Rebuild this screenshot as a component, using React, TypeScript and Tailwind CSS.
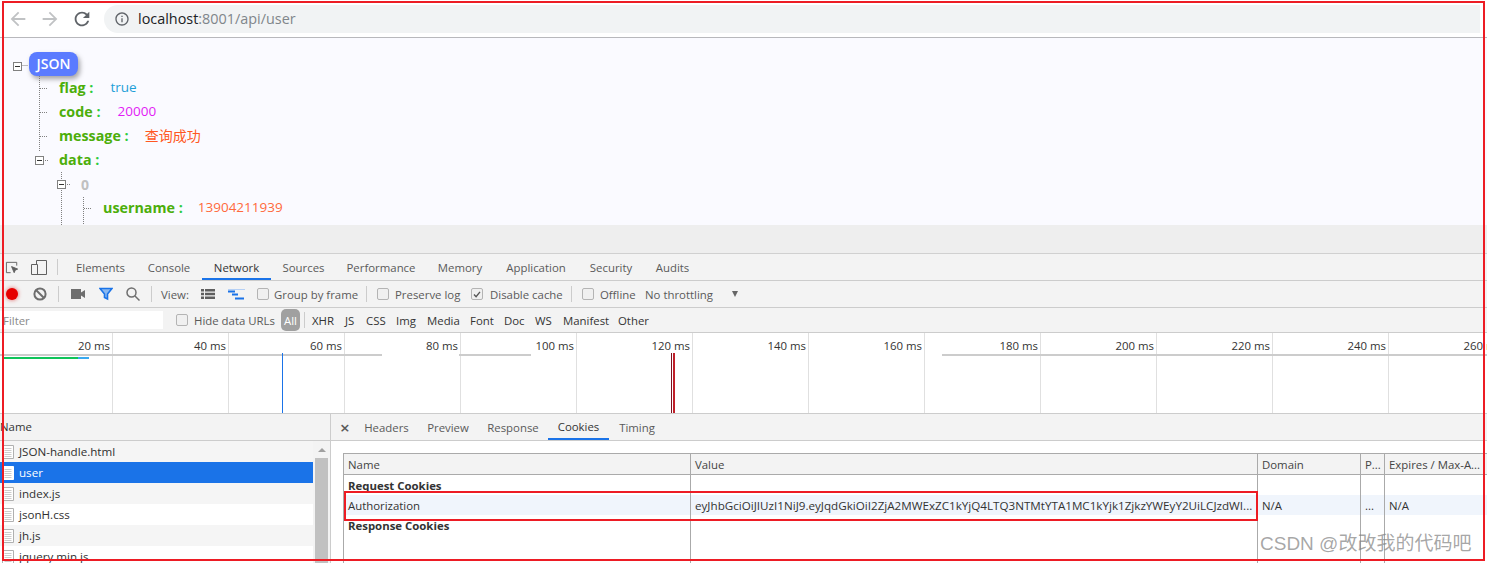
import type { ReactNode } from "react";

const font = "font-['Open_Sans','Noto_Sans_CJK_SC',sans-serif]";

const tabs = [
  ["Elements", 71],
  ["Console", 66],
  ["Network", 69],
  ["Sources", 65],
  ["Performance", 90],
  ["Memory", 68],
  ["Application", 84],
  ["Security", 66],
  ["Audits", 57],
] as const;

const filters = [
  ["XHR", 33],
  ["JS", 21],
  ["CSS", 30],
  ["Img", 31],
  ["Media", 43],
  ["Font", 34],
  ["Doc", 31],
  ["WS", 28],
  ["Manifest", 55],
  ["Other", 40],
] as const;

const ticks = ["20", "40", "60", "80", "100", "120", "140", "160", "180", "200", "220", "240", "260"];

const files = [
  ["JSON-handle.html", "bg-[#f5f5f5]"],
  ["user", "bg-[#1a73e8] text-white"],
  ["index.js", "bg-[#f5f5f5]"],
  ["jsonH.css", "bg-white"],
  ["jh.js", "bg-[#f5f5f5]"],
  ["jquery.min.js", "bg-white"],
] as const;

const cookieCols = "grid grid-cols-[347px_567px_103px_24px_1fr]";

function Check({ checked, className = "" }: { checked?: boolean; className?: string }) {
  return (
    <span className={`flex h-[12px] w-[12px] shrink-0 items-center justify-center rounded-[2px] border border-[#b4b4b4] bg-[#f0f0f0] ${className}`}>
      {checked && (
        <svg viewBox="0 0 11 11" className="h-[11px] w-[11px]">
          <path d="M2.2 5.6 4.5 8l4.3-5.4" fill="none" stroke="#555" strokeWidth="1.5" />
        </svg>
      )}
    </span>
  );
}

function Sep({ className = "" }: { className?: string }) {
  return <span className={`h-[16px] w-px shrink-0 bg-[#cccccc] ${className}`} />;
}

function Toggle({ className = "" }: { className?: string }) {
  return (
    <span className={`absolute flex h-[9px] w-[9px] items-center justify-center border border-[#808080] bg-white ${className}`}>
      <span className="h-px w-[5px] bg-[#333]" />
    </span>
  );
}

function Entry({ pad, name, children }: { pad: string; name: string; children: ReactNode }) {
  return (
    <div className={`flex h-6 items-center ${pad}`}>
      <span className="text-[14.3px] font-bold text-[#4cae0a]">
        {name} <span className="text-[#2ecc40]">:</span>
      </span>
      {children}
    </div>
  );
}

function DocIcon({ light }: { light?: boolean }) {
  return (
    <svg viewBox="0 0 12 14" className="ml-[2px] h-[14px] w-[12px] shrink-0">
      <path d="M.5.5h11v13H.5z" fill="#fff" stroke={light ? "#fff" : "#b0b0b0"} />
      <path d="M2.5 3.5h7M2.5 5.5h7M2.5 7.5h7M2.5 9.5h7M2.5 11.5h7" stroke="#cccccc" />
    </svg>
  );
}

function Cell({ className = "", children }: { className?: string; children?: ReactNode }) {
  return <div className={`overflow-hidden whitespace-nowrap border-l border-[#aaaaaa] pl-[4px] ${className}`}>{children}</div>;
}

export default function App() {
  return (
    <div className={`relative h-[563px] w-[1487px] overflow-hidden bg-white text-[#303030] ${font}`}>
      {/* browser bar */}
      <div className="flex h-[38px] items-center border-b border-[#b8b8bc]">
        <svg viewBox="0 0 24 24" className="ml-[7px] h-[22px] w-[22px]" fill="#c0c2c4">
          <path d="M20 11H7.83l5.59-5.59L12 4l-8 8 8 8 1.41-1.41L7.83 13H20v-2z" />
        </svg>
        <svg viewBox="0 0 24 24" className="ml-[10px] h-[22px] w-[22px]" fill="#c0c2c4">
          <path d="M12 4l-1.41 1.41L16.17 11H4v2h12.17l-5.58 5.59L12 20l8-8z" />
        </svg>
        <svg viewBox="0 0 24 24" className="ml-[10px] h-[22px] w-[22px]" fill="#5f6368">
          <path d="M17.65 6.35C16.2 4.9 14.21 4 12 4c-4.42 0-7.99 3.58-7.99 8s3.57 8 7.99 8c3.73 0 6.84-2.55 7.73-6h-2.08c-.82 2.33-3.04 4-5.65 4-3.31 0-6-2.69-6-6s2.69-6 6-6c1.66 0 3.14.69 4.22 1.78L13 11h7V4l-2.35 2.35z" />
        </svg>
        <div className="ml-[11px] flex h-[28px] w-[1376px] items-center rounded-l-[14px] bg-[#f1f3f4] pl-[10px]">
          <svg viewBox="0 0 24 24" className="h-[16px] w-[16px]" fill="#5f6368">
            <path d="M11 7h2v2h-2zm0 4h2v6h-2zm1-9C6.48 2 2 6.48 2 12s4.48 10 10 10 10-4.48 10-10S17.52 2 12 2zm0 18c-4.41 0-8-3.59-8-8s3.59-8 8-8 8 3.59 8 8-3.59 8-8 8z" />
          </svg>
          <span className="ml-[8px] text-[14.4px] text-[#202124]">
            localhost<span className="text-[#80868b]">:8001/api/user</span>
          </span>
        </div>
      </div>

      {/* json view */}
      <div className="relative h-[187px] bg-[#fafaff] pt-[14px]">
        <svg className="absolute left-0 top-0 h-[187px] w-[120px]" stroke="#808080" strokeDasharray="1 1" fill="none">
          <path d="M22.5 27.5H28M39.5 38v76M40 50.5h8M40 74.5h8M40 98.5h8M45 122.5h4M61.5 134v53M67 146.5h3M83.5 159v28M84 170.5h8" />
        </svg>
        <Toggle className="left-[13px] top-[24px]" />
        <Toggle className="left-[35px] top-[118px]" />
        <Toggle className="left-[57px] top-[142px]" />
        <div className="ml-[29px] flex h-6 w-[49px] items-center justify-center rounded-[8px] bg-[#5a7bff] pb-[2px] text-[14px] font-semibold text-white shadow-[2px_3px_5px_rgba(0,0,0,0.35)]">
          JSON
        </div>
        <Entry pad="pl-[59px]" name="flag">
          <span className="mb-[1px] ml-[17px] text-[13.5px] text-[#1e9fd8]">true</span>
        </Entry>
        <Entry pad="pl-[59px]" name="code">
          <span className="mb-[1px] ml-[17px] text-[13.5px] text-[#e21cf5]">20000</span>
        </Entry>
        <Entry pad="pl-[59px]" name="message">
          <span className="mb-[2px] ml-[16px] text-[14px] text-[#ff5722]">查询成功</span>
        </Entry>
        <Entry pad="pl-[59px]" name="data">
          <span />
        </Entry>
        <div className="flex h-6 items-center pl-[81px] text-[14px] font-bold text-[#c0c0c0]">0</div>
        <Entry pad="pl-[103px]" name="username">
          <span className="mb-[1px] ml-[15px] text-[13.5px] text-[#ff6a3c]">13904211939</span>
        </Entry>
      </div>

      <div className="h-[29px] border-b border-[#d0d0d0] bg-[#eeeeee]" />

      {/* devtools tabs */}
      <div className="flex h-[27px] items-stretch border-b border-[#cccccc] bg-[#f3f3f3] text-[11.4px] text-[#5a5a5a]">
        <svg viewBox="0 0 16 16" className="ml-[5px] mt-[6px] h-[15px] w-[15px]" fill="none" stroke="#606060">
          <path d="M6 13.5H1.5v-11h11V6" />
          <path d="M7 7l6.5 2.7-2.6 1.100-1.100 2.700z" fill="#606060" />
        </svg>
        <svg viewBox="0 0 16 16" className="ml-[11px] mt-[5px] h-[16px] w-[16px]" fill="none" stroke="#606060">
          <path d="M5.500 5V1.500h10v14h-10" />
          <path d="M.5 5.500h6v10h-6z" />
        </svg>
        <Sep className="ml-[10px] mt-[5px]" />
        <div className="ml-[7px] flex">
          {tabs.map(([name, width]) => (
            <div
              key={name}
              style={{ width }}
              className={`flex items-center justify-center border-b-2 pt-[3px] ${name === "Network" ? "border-[#1a73e8] text-[#333]" : "border-transparent"}`}
            >
              {name}
            </div>
          ))}
        </div>
      </div>

      {/* network toolbar */}
      <div className="flex h-[27px] items-center border-b border-[#cccccc] bg-[#f3f3f3] text-[11.4px] text-[#5a5a5a]">
        <span className="ml-[6px] h-[12px] w-[12px] rounded-full bg-[#e60000] shadow-[0_0_4px_#e06060]" />
        <svg viewBox="0 0 14 14" className="ml-[15px] h-[14px] w-[14px]" fill="none" stroke="#6e6e6e" strokeWidth="2">
          <circle cx="7" cy="7" r="5.6" />
          <path d="M3 3l8 8" />
        </svg>
        <Sep className="ml-[11px]" />
        <svg viewBox="0 0 14 10" className="ml-[12px] h-[10px] w-[14px]" fill="#6e6e6e">
          <path d="M0 0h10v10H0zM10 3.500 14 1v8l-4-2.500z" />
        </svg>
        <svg viewBox="0 0 14 14" className="ml-[14px] h-[14px] w-[14px]" fill="#8ab8f0" stroke="#1a73e8" strokeWidth="1.6">
          <path d="M1 1.500h12L8.500 7v5l-3-1.500V7z" />
        </svg>
        <svg viewBox="0 0 14 14" className="ml-[13px] h-[14px] w-[14px]" fill="none" stroke="#6e6e6e" strokeWidth="1.5">
          <circle cx="5.500" cy="5.500" r="4.500" />
          <path d="M9 9l4.500 4.500" />
        </svg>
        <Sep className="ml-[11px]" />
        <span className="ml-[9px] w-[40px] pt-[1px]">View:</span>
        <svg viewBox="0 0 14 10" className="h-[10px] w-[14px]" fill="#5f5f5f">
          <path d="M0 0h3v2.500H0zM4 0h10v2.500H4zM0 3.750h3v2.500H0zM4 3.750h10v2.500H4zM0 7.500h3V10H0zM4 7.500h10V10H4z" />
        </svg>
        <svg viewBox="0 0 17 11" className="ml-[13px] h-[11px] w-[17px]">
          <path d="M0 .500h17" stroke="#b5d0f5" />
          <path d="M0 2.500h7M4 5.500h6M7 9.500h9" stroke="#1a73e8" strokeWidth="2" />
        </svg>
        <Check className="ml-[12px]" />
        <span className="ml-[5px] w-[92px] pt-[1px]">Group by frame</span>
        <Sep />
        <Check className="ml-[10px]" />
        <span className="ml-[6px] w-[76px] pt-[1px]">Preserve log</span>
        <Check checked />
        <span className="ml-[7px] w-[81px] pt-[1px]">Disable cache</span>
        <Sep />
        <Check className="ml-[10px]" />
        <span className="ml-[6px] w-[45px] pt-[1px]">Offline</span>
        <span className="w-[87px] pt-[1px]">No throttling</span>
        <span className="h-0 w-0 border-x-[3.500px] border-t-[6px] border-x-transparent border-t-[#666]" />
      </div>

      {/* filter row */}
      <div className="flex h-[25px] items-center border-b border-[#cccccc] bg-[#f3f3f3] text-[11.4px] text-[#333]">
        <div className="flex h-[18px] w-[163px] items-center bg-white pl-[3px] pt-[2px] text-[#8a8a8a]">Filter</div>
        <Check className="ml-[13px]" />
        <span className="ml-[6px] w-[87px] pt-[2px] text-[#5a5a5a]">Hide data URLs</span>
        <span className="flex h-[22px] w-[19px] items-center justify-center rounded-[5px] bg-[#a0a0a0] pt-[2px] text-white">All</span>
        <Sep className="ml-[4px]" />
        <div className="ml-[7px] flex pt-[2px]">
          {filters.map(([name, width]) => (
            <span key={name} style={{ width }}>
              {name}
            </span>
          ))}
        </div>
      </div>

      {/* timeline */}
      <div className="relative flex h-[81px] border-b border-[#cccccc] bg-white text-[11.4px] text-[#333]">
        {ticks.map((t, i) => (
          <div key={t} className={`h-full shrink-0 border-r border-[#e0e0e0] pr-[2px] pt-[4px] text-right ${i === 0 ? "w-[113px]" : "w-[116px]"}`}>
            {t} ms
          </div>
        ))}
        <span className="absolute left-0 top-[21px] h-[2px] w-[382px] bg-[#cccccc]" />
        <span className="absolute left-[459px] top-[21px] h-[2px] w-[72px] bg-[#cccccc]" />
        <span className="absolute left-[942px] top-[21px] h-[2px] w-[545px] bg-[#cccccc]" />
        <span className="absolute left-[4px] top-[24px] h-[2px] w-[74px] bg-[#0fc45a]" />
        <span className="absolute left-[78px] top-[24px] h-[2px] w-[11px] bg-[#39a9f0]" />
        <span className="absolute left-[282px] top-[20px] h-[60px] w-px bg-[#1a73e8]" />
        <span className="absolute left-[671px] top-[20px] h-[60px] w-px bg-[#7a1020]" />
        <span className="absolute left-[673px] top-[20px] h-[60px] w-[2px] bg-[#c0202a]" />
      </div>

      {/* bottom split */}
      <div className="flex h-[149px] text-[11.4px]">
        <div className="flex w-[331px] shrink-0 flex-col border-r border-[#cccccc]">
          <div className="flex h-[27px] shrink-0 items-center border-b border-[#cccccc] bg-[#f3f3f3] text-[#333]">Name</div>
          <div className="flex min-h-0 flex-1">
            <div className="w-[313px] shrink-0 text-[11.6px]">
              {files.map(([name, cls]) => (
                <div key={name} className={`flex h-[21px] items-center gap-[5px] ${cls}`}>
                  <DocIcon light={name === "user"} />
                  <span>{name}</span>
                </div>
              ))}
            </div>
            <div className="flex flex-1 flex-col items-center bg-[#f3f3f3] pt-[7px]">
              <span className="h-0 w-0 border-x-[4px] border-b-[4px] border-x-transparent border-b-[#a0a0a0]" />
              <span className="mt-[6px] h-[110px] w-[13px] bg-[#c1c1c1]" />
            </div>
          </div>
        </div>

        <div className="min-w-0 flex-1">
          <div className="flex h-[27px] items-stretch border-b border-[#cccccc] bg-[#f3f3f3] text-[#5a5a5a]">
            <span className="ml-[9px] flex w-[10px] items-center text-[17px] font-semibold leading-none">×</span>
            <div className="ml-[5px] flex pt-[1px]">
              <div className="flex w-[63px] items-center justify-center">Headers</div>
              <div className="flex w-[60px] items-center justify-center">Preview</div>
              <div className="flex w-[70px] items-center justify-center">Response</div>
              <div className="flex w-[61px] items-center justify-center border-b-2 border-[#1a73e8] text-[#333]">Cookies</div>
              <div className="flex w-[56px] items-center justify-center">Timing</div>
            </div>
          </div>

          <div className="ml-[12px] mt-[12px] flex h-[110px] flex-col text-[#333]">
            <div className={`${cookieCols} h-[22px] border-y border-[#aaaaaa] bg-[#f3f3f3] leading-[21px] text-[#444]`}>
              <Cell>Name</Cell>
              <Cell>Value</Cell>
              <Cell>Domain</Cell>
              <Cell>P...</Cell>
              <Cell>Expires / Max-A...</Cell>
            </div>
            <div className={`${cookieCols} h-[20px] leading-[22px]`}>
              <Cell className="font-bold">Request Cookies</Cell>
              <Cell />
              <Cell />
              <Cell />
              <Cell />
            </div>
            <div className={`${cookieCols} h-[20px] bg-[#f0f5fc] leading-[22px]`}>
              <Cell>Authorization</Cell>
              <Cell className="text-[11.65px]">eyJhbGciOiJIUzI1NiJ9.eyJqdGkiOiI2ZjA2MWExZC1kYjQ4LTQ3NTMtYTA1MC1kYjk1ZjkzYWEyY2UiLCJzdWI...</Cell>
              <Cell>N/A</Cell>
              <Cell>...</Cell>
              <Cell>N/A</Cell>
            </div>
            <div className={`${cookieCols} h-[20px] leading-[22px]`}>
              <Cell className="font-bold">Response Cookies</Cell>
              <Cell />
              <Cell />
              <Cell />
              <Cell />
            </div>
            <div className={`${cookieCols} flex-1`}>
              <Cell />
              <Cell />
              <Cell />
              <Cell />
              <Cell />
            </div>
          </div>
        </div>
      </div>

      {/* annotations on top of the screenshot */}
      <div className="pointer-events-none absolute left-[2px] top-[1px] h-[560px] w-[1483px] border-2 border-[#ed1c24]" />
      <div className="pointer-events-none absolute left-[344px] top-[491px] h-[30px] w-[914px] border-2 border-[#ed1c24]" />
      <div className="pointer-events-none absolute left-[1260px] top-[530px] text-[19px] font-['Liberation_Sans','Noto_Sans_CJK_SC',sans-serif] text-[#7f7f7f]/70">
        CSDN @改改我的代码吧
      </div>
    </div>
  );
}
